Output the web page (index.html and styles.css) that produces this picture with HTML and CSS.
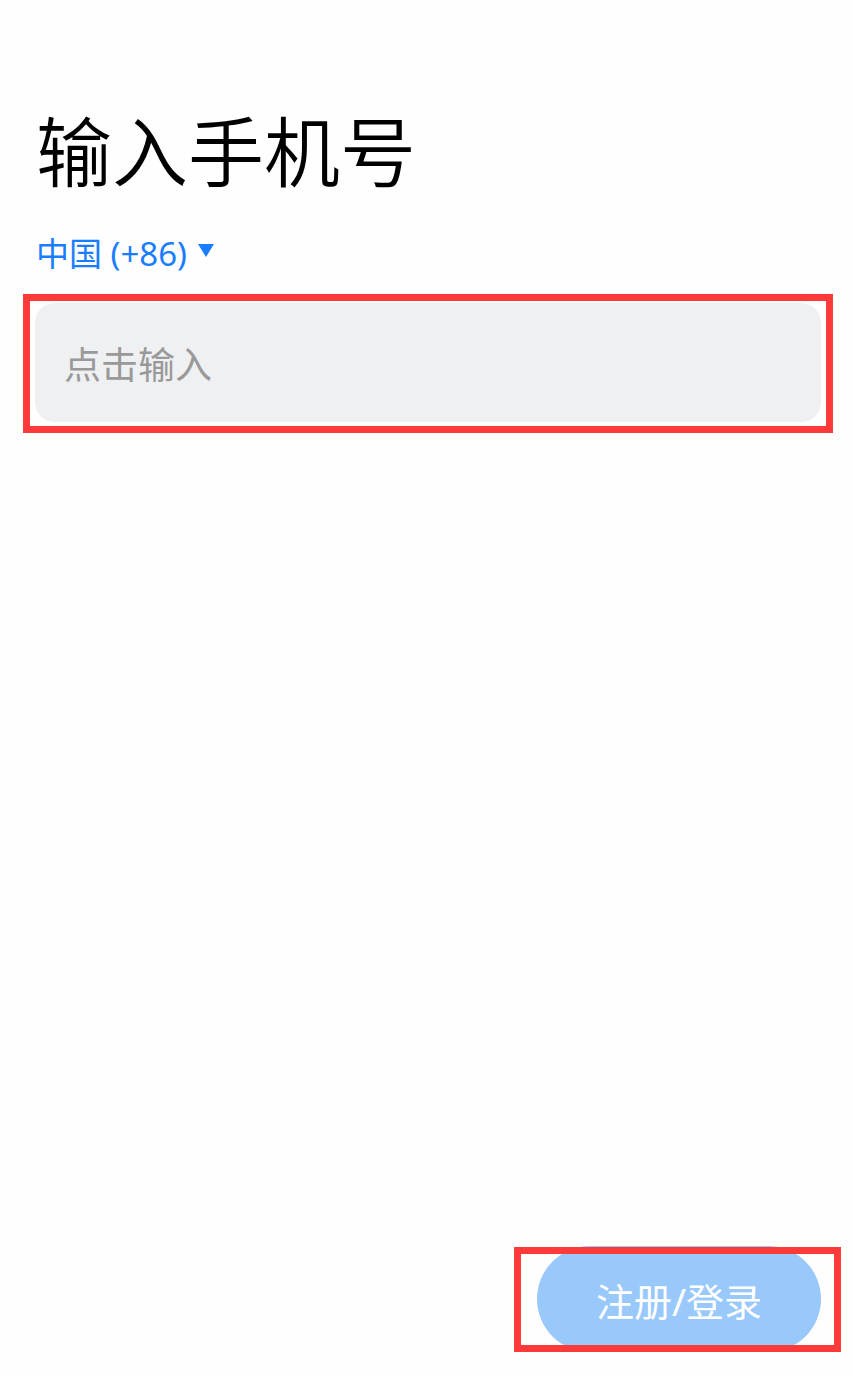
FILE: index.html
```html
<!DOCTYPE html>
<html lang="zh">
<head>
<meta charset="utf-8">
<link rel="stylesheet" href="styles.css">
</head>
<body>
<div class="page">
  <h1 class="title">输入手机号</h1>
  <div class="country">中国 (+86)<svg class="caret" width="16" height="13" viewBox="0 0 16 13"><polygon points="0,0 16,0 8,13" fill="#1a7dff"/></svg></div>
  <div class="input">
    <span class="placeholder">点击输入</span>
  </div>
  <button class="submit">注册/登录</button>
</div>
<div class="mark mark-input"></div>
<div class="mark mark-button"></div>
</body>
</html>
```
FILE: styles.css
```css
html, body {
  margin: 0;
  padding: 0;
  background: #fefefe;
}
body {
  font-family: "Noto Sans", "Noto Sans CJK SC", sans-serif;
}
.page {
  box-sizing: border-box;
  min-height: 1376px;
  padding: 110px 32px 24px 35px;
  display: flex;
  flex-direction: column;
}
.title {
  margin: 0;
  font-family: "Noto Sans CJK SC", sans-serif;
  font-weight: 350;
  font-size: 76px;
  line-height: 76px;
  color: #000;
  padding-left: 1px;
}
.country {
  margin-top: 51px;
  font-size: 33px;
  line-height: 33px;
  color: #1a7dff;
  display: flex;
  align-items: center;
  padding-left: 1px;
}
.caret {
  margin-left: 11px;
  margin-top: -6px;
}
.input {
  margin-top: 33px;
  height: 119px;
  background: #eff0f2;
  border-radius: 20px;
  display: flex;
  align-items: center;
  padding-left: 29px;
}
.placeholder {
  font-family: "Noto Sans CJK SC", sans-serif;
  font-size: 37px;
  color: #999999;
}
.submit {
  margin-top: auto;
  align-self: flex-end;
  width: 284px;
  height: 106px;
  border: none;
  border-radius: 53px;
  background: #99c8fb;
  color: #ffffff;
  font-family: "Noto Sans", "Noto Sans CJK SC", sans-serif;
  font-size: 38px;
  padding: 0;
}
.mark {
  position: absolute;
  box-sizing: border-box;
  border: 7px solid #fd3a3a;
}
.mark-input {
  left: 23px;
  top: 294px;
  width: 810px;
  height: 139px;
}
.mark-button {
  left: 514px;
  top: 1247px;
  width: 327px;
  height: 105px;
}
```
